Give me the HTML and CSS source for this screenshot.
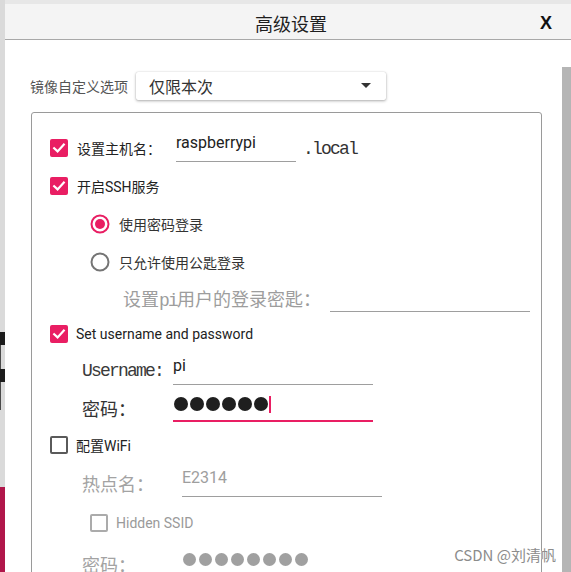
FILE: index.html
```html
<!DOCTYPE html>
<html lang="zh-CN">
<head>
<meta charset="utf-8">
<title>高级设置</title>
<link rel="stylesheet" href="styles.css">
</head>
<body>
<div class="screen">
  <div class="backdrop">
    <div class="bd-gap1"></div>
    <div class="bd-dark"></div>
    <div class="bd-line"></div>
    <div class="bd-dark"></div>
    <div class="bd-line2"></div>
    <div class="bd-gap2"></div>
    <div class="bd-crimson"></div>
  </div>
  <div class="dialog">
    <header class="dialog-header">
      <h1 class="dialog-title">高级设置</h1>
      <span class="dialog-close">X</span>
    </header>
    <div class="dialog-body">
      <div class="content">
        <div class="select-row">
          <span class="select-label">镜像自定义选项</span>
          <div class="select">
            <span class="select-value">仅限本次</span>
            <span class="select-arrow"></span>
          </div>
        </div>
        <div class="group">
          <div class="row h38">
            <span class="cb checked"><svg viewBox="0 0 18 18" width="18" height="18"><path d="M4.2 9.2 L7.6 12.4 L13.8 5.6" fill="none" stroke="#fff" stroke-width="2.2" stroke-linecap="square"/></svg></span>
            <span class="cb-label cn">设置主机名：</span>
            <span class="field host">raspberrypi</span>
            <span class="suffix mono">.local</span>
          </div>
          <div class="row h38">
            <span class="cb checked"><svg viewBox="0 0 18 18" width="18" height="18"><path d="M4.2 9.2 L7.6 12.4 L13.8 5.6" fill="none" stroke="#fff" stroke-width="2.2" stroke-linecap="square"/></svg></span>
            <span class="cb-label">开启SSH服务</span>
          </div>
          <div class="row h38 indent-radio">
            <svg class="radio" viewBox="0 0 20 20" width="20" height="20"><circle cx="10" cy="10" r="8.5" fill="none" stroke="#e91e63" stroke-width="2"/><circle cx="10" cy="10" r="5" fill="#e91e63"/></svg>
            <span class="radio-label">使用密码登录</span>
          </div>
          <div class="row h37 indent-radio">
            <svg class="radio" viewBox="0 0 20 20" width="20" height="20"><circle cx="10" cy="10" r="8.5" fill="none" stroke="#757575" stroke-width="2"/></svg>
            <span class="radio-label">只允许使用公匙登录</span>
          </div>
          <div class="row h36 indent-key">
            <span class="key-label">设置<span class="mono">pi</span>用户的登录密匙：</span>
            <span class="field wide"></span>
          </div>
          <div class="row h36">
            <span class="cb checked"><svg viewBox="0 0 18 18" width="18" height="18"><path d="M4.2 9.2 L7.6 12.4 L13.8 5.6" fill="none" stroke="#fff" stroke-width="2.2" stroke-linecap="square"/></svg></span>
            <span class="cb-label en">Set username and password</span>
          </div>
          <div class="row h37 indent-field">
            <span class="flabel mono w91">Username:</span>
            <span class="field wide">pi</span>
          </div>
          <div class="row h38 indent-field">
            <span class="flabel w91">密码：</span>
            <span class="field wide focus">
              <span class="dot"></span><span class="dot"></span><span class="dot"></span><span class="dot"></span><span class="dot"></span><span class="dot"></span><span class="caret"></span>
            </span>
          </div>
          <div class="row h36">
            <span class="cb"></span>
            <span class="cb-label en">配置WiFi</span>
          </div>
          <div class="row h39 indent-field">
            <span class="flabel muted w100">热点名：</span>
            <span class="field wide muted">E2314</span>
          </div>
          <div class="row h41 indent-radio">
            <span class="cb disabled"></span>
            <span class="cb-label en muted-text">Hidden SSID</span>
          </div>
          <div class="row h41 indent-field">
            <span class="flabel muted w101">密码：</span>
            <span class="field wide muted plain">
              <span class="dot small"></span><span class="dot small"></span><span class="dot small"></span><span class="dot small"></span><span class="dot small"></span><span class="dot small"></span><span class="dot small"></span><span class="dot small"></span>
            </span>
          </div>
        </div>
      </div>
      <div class="scrollbar"></div>
    </div>
  </div>
  <div class="watermark">CSDN @刘清帆</div>
</div>
</body>
</html>
```

FILE: styles.css
```css
* { box-sizing: border-box; }
html, body { margin: 0; padding: 0; }
body {
  width: 571px;
  height: 572px;
  overflow: hidden;
  background: #e7e7e7;
  font-family: Roboto, "Noto Sans CJK SC", sans-serif;
  color: #212121;
}
.screen { position: relative; display: flex; height: 572px; overflow: hidden; }

/* background app strip on the left */
.backdrop { width: 5px; flex: none; background: #dadada; display: flex; flex-direction: column; }
.bd-gap1 { height: 332px; }
.bd-dark { height: 13px; background: #1c1c1c; }
.bd-line { height: 24px; border-left: 1px solid #4a4a4a; }
.bd-line2 { height: 28px; border-left: 1px solid #4a4a4a; }
.bd-gap2 { height: 77px; }
.bd-crimson { flex: 1; background: #b0164a; }

/* dialog */
.dialog { flex: 1; min-width: 0; margin-top: 4px; background: #fff; display: flex; flex-direction: column; }
.dialog-header {
  height: 36px; flex: none;
  background: #f4f4f4;
  border-bottom: 1px solid #a8a8a8;
  display: flex; align-items: center;
  padding-left: 37px;
}
.dialog-title {
  flex: 1; margin: 0; text-align: center;
  font-family: "Noto Sans CJK SC", sans-serif;
  font-size: 18px; font-weight: 400; color: #1e1e1e;
  line-height: 24px; padding-top: 3px;
}
.dialog-close {
  margin-right: 19px; padding-top: 3px;
  font-family: "Liberation Sans", Arial, sans-serif;
  font-size: 18px; font-weight: 700; color: #111; line-height: 24px;
}
.dialog-body { flex: 1; min-height: 0; display: flex; }
.content { flex: 1; min-width: 0; padding: 32px 20px 0 25px; }
.scrollbar { width: 9px; flex: none; margin-top: 27px; background: #b5b5b5; }

/* select */
.select-row { display: flex; align-items: center; height: 28px; }
.select-label { width: 106px; font-size: 14px; color: #555; }
.select {
  width: 250px; height: 28px;
  display: flex; align-items: center; justify-content: space-between;
  padding: 0 15px 1px 13px;
  border-radius: 2px;
  box-shadow: 0 1px 3px rgba(0,0,0,0.32), 0 0 1px rgba(0,0,0,0.2);
  font-size: 16px; color: #333;
}
.select-arrow {
  width: 0; height: 0;
  border-left: 5px solid transparent;
  border-right: 5px solid transparent;
  border-top: 5px solid #333;
}

/* group */
.group {
  margin: 12px 0 0 1px;
  border: 1px solid #9a9a9a;
  border-radius: 3px;
  padding: 16px 0 0 18px;
  height: 520px;
}
.row { display: flex; align-items: center; }
.h36 { height: 36px; }
.h37 { height: 37px; }
.h38 { height: 38px; }
.h39 { height: 39px; }
.h41 { height: 41px; }
.indent-radio { padding-left: 40px; }
.indent-key { padding-left: 73px; }
.indent-field { padding-left: 32px; }

.cb {
  width: 18px; height: 18px; flex: none;
  border-radius: 2px;
  border: 2px solid #5a5a5a;
  display: flex;
}
.cb.checked { background: #e91e63; border: none; }
.cb.disabled { border-color: #ababab; }
.cb-label { margin-left: 9px; font-size: 14px; color: #222; }
.cb-label.en { margin-left: 8px; }
.muted-text { color: #9a9a9a; }

.radio { flex: none; }
.radio-label { margin-left: 9px; font-size: 14px; color: #333; }

.mono {
  font-family: "Liberation Mono", "Courier New", monospace;
  letter-spacing: -1.8px;
}
.suffix { margin-left: 7px; font-size: 18px; color: #333; line-height: 18px; margin-top: 2px; }
.key-label {
  width: 207px;
  font-family: "Noto Sans CJK SC", sans-serif;
  font-size: 18px; color: #9d9d9d;
}
.key-label .mono { font-size: 18px; }

.flabel {
  font-family: "Noto Sans CJK SC", sans-serif;
  font-size: 18px; color: #333;
}
.flabel.mono { font-family: "Liberation Mono", monospace; font-size: 18px; color: #3a3a3a; }
.flabel.muted { color: #a3a3a3; }
.w91 { width: 91px; }
.w100 { width: 100px; }
.w101 { width: 101px; }

.field {
  height: 28px; flex: none;
  border-bottom: 1px solid #9e9e9e;
  font-size: 16px; line-height: 18px; color: #212121;
  display: flex; align-items: flex-start;
}
.field.host { width: 120px; margin-left: 15px; }
.field.wide { width: 200px; }
.field.muted { color: #9e9e9e; }
.field.plain { border-bottom: none; padding-top: 3px; gap: 3px; }
.field.focus { border-bottom: 2px solid #e91e63; padding-left: 1px; padding-top: 3px; gap: 2px; }

.dot { width: 14px; height: 14px; border-radius: 50%; background: #1f1f1f; flex: none; }
.dot.small { width: 13px; height: 13px; background: #a0a0a0; }
.caret { width: 2px; height: 17px; margin-top: -1px; margin-left: -1px; background: #e91e63; }

.watermark {
  position: absolute; right: 15px; bottom: 8px;
  font-family: "Noto Sans CJK SC", sans-serif;
  font-size: 15px; line-height: 18px; color: #8c8c8c;
  text-shadow: 0 0 1px #fff, 0 0 1px #fff;
}
```
